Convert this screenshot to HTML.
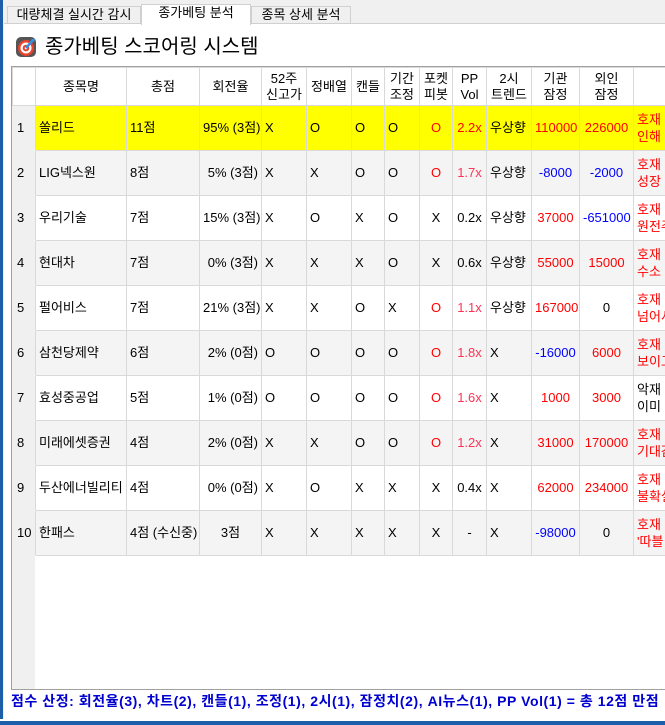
<!DOCTYPE html>
<html><head><meta charset="utf-8"><style>
*{margin:0;padding:0;box-sizing:border-box}
body{width:665px;height:725px;overflow:hidden;background:#f0f0f0;font-family:"Liberation Sans","Noto Sans CJK KR","NanumGothic",sans-serif;font-size:13px;color:#000;position:relative}
.edge{position:absolute;left:0;top:0;width:3px;height:725px;background:#1c5fa8}
.bot{position:absolute;left:0;top:721px;width:665px;height:4px;background:#1c5fa8}
.botl{position:absolute;left:0;top:719px;width:665px;height:2px;background:#fff}
.tabs{position:absolute;left:7px;top:4px;height:19px}
.tab{position:absolute;top:2px;height:18px;border:1px solid #d0d0d0;background:#f0f0f0;font-size:13px;line-height:16px;text-align:center}
.tab.sel{top:0;height:21px;background:#fff;border-bottom:none;z-index:2}
.pane{position:absolute;left:4px;top:23px;width:670px;height:698px;background:#fff;border-top:1px solid #d0d0d0}
.title{position:absolute;left:15px;top:34px;font-size:20px;line-height:26px;display:flex;align-items:center}
.grid{position:absolute;left:11px;top:66px;width:660px;height:624px;border:1px solid #a0a0a0;background:#fff;overflow:hidden}
.rh{position:absolute;left:0;top:38px;width:23px;height:590px;background:#f0f0f0}
table{position:absolute;left:0;top:0;border-collapse:collapse;table-layout:fixed;width:662px}
tr{height:45px}
tr.h{height:38px}
td{border:1px solid #d9d9d9;padding:0 3px;white-space:nowrap;overflow:hidden;line-height:16px}
tr.h td{text-align:center;background:#fff}
td.n{background:#f0f0f0;border-color:#f0f0f0 #d9d9d9 #f0f0f0 #f0f0f0;text-align:left;padding-left:4px}
tr.h td.n{background:#fff;border-color:#d9d9d9}
tr.g td{background:#f4f4f4}
tr.y td{background:#ffff00}
tr.y td.n,tr.g td.n{background:#f0f0f0}
.c{text-align:center}.r{text-align:right}
.red{color:#ff0000}.pk{color:#ff3355}.bl{color:#0000ff}
.last div{height:34px;overflow:hidden;white-space:nowrap;line-height:17px}
.foot{position:absolute;left:11px;top:692px;font-size:14px;letter-spacing:0.55px;font-weight:bold;color:#0000d0;line-height:18px;white-space:nowrap}
</style></head><body>
<div class="edge"></div>
<div class="pane"></div>
<div class="tabs">
<div class="tab" style="left:0;width:134px">대량체결 실시간 감시</div>
<div class="tab sel" style="left:134px;width:110px">종가베팅 분석</div>
<div class="tab" style="left:244px;width:100px">종목 상세 분석</div>
</div>
<div class="title"><svg width="22" height="22" viewBox="0 0 22 22"><rect x="1" y="1" width="20" height="20" rx="5" fill="#555"/><circle cx="11" cy="12" r="8" fill="#e8432c"/><circle cx="11" cy="12" r="5.5" fill="#fff"/><circle cx="11" cy="12" r="3.3" fill="#e8432c"/><circle cx="11" cy="12" r="1.3" fill="#fff"/><path d="M11 12 L18 4" stroke="#3a8ee0" stroke-width="2.5"/><path d="M16 3l4 0-1 3z" fill="#3a8ee0"/></svg><span style="margin-left:8px">종가베팅 스코어링 시스템</span></div>
<div class="grid">
<div class="rh"></div>
<table>
<colgroup><col style="width:23px"><col style="width:91px"><col style="width:73px"><col style="width:62px"><col style="width:45px"><col style="width:45px"><col style="width:33px"><col style="width:35px"><col style="width:33px"><col style="width:34px"><col style="width:45px"><col style="width:48px"><col style="width:54px"><col style="width:41px"></colgroup>
<tr class="h"><td class="n"></td><td>종목명</td><td>총점</td><td>회전율</td><td>52주<br>신고가</td><td>정배열</td><td>캔들</td><td>기간<br>조정</td><td>포켓<br>피봇</td><td>PP<br>Vol</td><td>2시<br>트렌드</td><td>기관<br>잠정</td><td>외인<br>잠정</td><td></td></tr>
<tr class="y"><td class="n">1</td><td>쏠리드</td><td>11점</td><td class="r">95% (3점)</td><td>X</td><td>O</td><td>O</td><td>O</td><td class="c red">O</td><td class="c red">2.2x</td><td>우상향</td><td class="c red">110000</td><td class="c red">226000</td><td class="last red"><div>호재<br>인해</div></td></tr>
<tr class="g"><td class="n">2</td><td>LIG넥스원</td><td>8점</td><td class="r">5% (3점)</td><td>X</td><td>X</td><td>O</td><td>O</td><td class="c red">O</td><td class="c pk">1.7x</td><td>우상향</td><td class="c bl">-8000</td><td class="c bl">-2000</td><td class="last red"><div>호재<br>성장</div></td></tr>
<tr><td class="n">3</td><td>우리기술</td><td>7점</td><td class="r">15% (3점)</td><td>X</td><td>O</td><td>X</td><td>O</td><td class="c">X</td><td class="c">0.2x</td><td>우상향</td><td class="c red">37000</td><td class="c bl">-651000</td><td class="last red"><div>호재<br>원전주</div></td></tr>
<tr class="g"><td class="n">4</td><td>현대차</td><td>7점</td><td class="r">0% (3점)</td><td>X</td><td>X</td><td>X</td><td>O</td><td class="c">X</td><td class="c">0.6x</td><td>우상향</td><td class="c red">55000</td><td class="c red">15000</td><td class="last red"><div>호재<br>수소</div></td></tr>
<tr><td class="n">5</td><td>펄어비스</td><td>7점</td><td class="r">21% (3점)</td><td>X</td><td>X</td><td>O</td><td>X</td><td class="c red">O</td><td class="c pk">1.1x</td><td>우상향</td><td class="c red">167000</td><td class="c">0</td><td class="last red"><div>호재<br>넘어서</div></td></tr>
<tr class="g"><td class="n">6</td><td>삼천당제약</td><td>6점</td><td class="r">2% (0점)</td><td>O</td><td>O</td><td>O</td><td>O</td><td class="c red">O</td><td class="c pk">1.8x</td><td>X</td><td class="c bl">-16000</td><td class="c red">6000</td><td class="last red"><div>호재<br>보이고</div></td></tr>
<tr><td class="n">7</td><td>효성중공업</td><td>5점</td><td class="r">1% (0점)</td><td>O</td><td>O</td><td>O</td><td>O</td><td class="c red">O</td><td class="c pk">1.6x</td><td>X</td><td class="c red">1000</td><td class="c red">3000</td><td class="last"><div>악재<br>이미</div></td></tr>
<tr class="g"><td class="n">8</td><td>미래에셋증권</td><td>4점</td><td class="r">2% (0점)</td><td>X</td><td>X</td><td>O</td><td>O</td><td class="c red">O</td><td class="c pk">1.2x</td><td>X</td><td class="c red">31000</td><td class="c red">170000</td><td class="last red"><div>호재<br>기대감</div></td></tr>
<tr><td class="n">9</td><td>두산에너빌리티</td><td>4점</td><td class="r">0% (0점)</td><td>X</td><td>O</td><td>X</td><td>X</td><td class="c">X</td><td class="c">0.4x</td><td>X</td><td class="c red">62000</td><td class="c red">234000</td><td class="last red"><div>호재<br>불확실</div></td></tr>
<tr class="g"><td class="n">10</td><td>한패스</td><td>4점 (수신중)</td><td class="c">3점</td><td>X</td><td>X</td><td>X</td><td>X</td><td class="c">X</td><td class="c">-</td><td>X</td><td class="c bl">-98000</td><td class="c">0</td><td class="last red"><div>호재<br>'따블</div></td></tr>
</table>
</div>
<div class="foot">점수 산정: 회전율(3), 차트(2), 캔들(1), 조정(1), 2시(1), 잠정치(2), AI뉴스(1), PP Vol(1) = 총 12점 만점</div>
<div class="botl"></div><div class="bot"></div>
</body></html>
